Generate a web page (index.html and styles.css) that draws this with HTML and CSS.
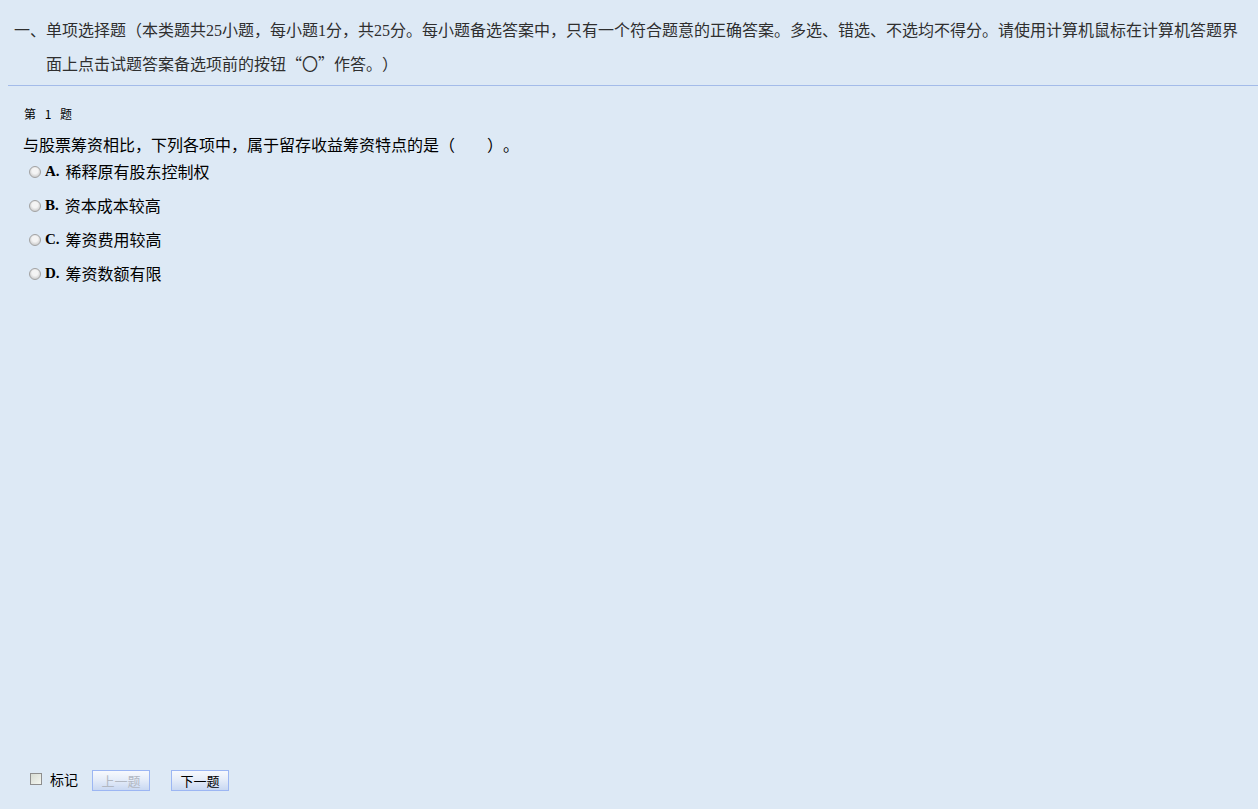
FILE: index.html
```html
<!DOCTYPE html>
<html lang="zh-CN">
<head>
<meta charset="utf-8">
<title>单项选择题</title>
<link rel="stylesheet" href="styles.css">
</head>
<body>
<div class="page">
  <div class="section-head">
    <p class="section-title">一、单项选择题（本类题共25小题，每小题1分，共25分。每小题备选答案中，只有一个符合题意的正确答案。多选、错选、不选均不得分。请使用计算机鼠标在计算机答题界面上点击试题答案备选项前的<span class="cjk">按钮“〇”作答。）</span></p>
  </div>
  <div class="question">
    <div class="q-no">第 1 题</div>
    <div class="q-text">与股票筹资相比，下列各项中，属于留存收益筹资特点的是（　　）。</div>
    <ul class="options">
      <li class="option"><span class="radio"></span><b class="letter">A.</b><span class="opt-text">稀释原有股东控制权</span></li>
      <li class="option"><span class="radio"></span><b class="letter">B.</b><span class="opt-text">资本成本较高</span></li>
      <li class="option"><span class="radio"></span><b class="letter">C.</b><span class="opt-text">筹资费用较高</span></li>
      <li class="option"><span class="radio"></span><b class="letter">D.</b><span class="opt-text">筹资数额有限</span></li>
    </ul>
  </div>
  <div class="footer">
    <label class="mark"><span class="checkbox"></span><span class="mark-text">标记</span></label>
    <button class="btn btn-disabled" type="button">上一题</button>
    <button class="btn" type="button">下一题</button>
  </div>
</div>
</body>
</html>
```
FILE: styles.css
```css
html, body {
  margin: 0;
  padding: 0;
  background: #dde9f5;
}
body {
  font-family: "Liberation Serif", "Noto Sans CJK SC", serif;
  color: #000;
  text-spacing-trim: space-all;
}
.page {
  display: flex;
  flex-direction: column;
  min-height: 809px;
  box-sizing: border-box;
}
.cjk {
  font-family: "Noto Sans CJK SC", sans-serif;
}
.section-head {
  margin-left: 8px;
  border-bottom: 1px solid #a3bbe9;
  padding: 14px 16px 4px 38px;
}
.section-title {
  margin: 0;
  font-size: 16px;
  line-height: 33px;
  text-indent: -32px;
  color: #2f2f2f;
}
.question {
  flex: 1;
  padding: 19px 0 0 23px;
}
.q-no {
  font-family: "Noto Sans CJK SC", sans-serif;
  font-size: 12px;
  line-height: 18px;
  padding-left: 1px;
  word-spacing: 6px;
}
.q-text {
  font-size: 16px;
  line-height: 20px;
  margin-top: 13px;
}
.options {
  list-style: none;
  margin: 0;
  padding: 0 0 0 6px;
}
.option {
  display: flex;
  align-items: center;
  height: 34px;
  font-size: 16px;
  margin-top: -2px;
}
.option + .option {
  margin-top: 0;
}
.radio {
  width: 10px;
  height: 10px;
  border-radius: 50%;
  border: 1px solid #a2a2a2;
  background: radial-gradient(circle at 50% 40%, #f4f4f4 0 35%, #d4d4d4 70%);
  margin-right: 4px;
  margin-top: 1px;
}
.letter {
  font-family: "Liberation Serif", serif;
  font-size: 15px;
  font-weight: bold;
  margin-right: 6px;
}
.opt-text {
  font-family: "Noto Sans CJK SC", sans-serif;
}
.footer {
  display: flex;
  align-items: center;
  padding: 0 0 18px 30px;
  height: 21px;
}
.mark {
  display: flex;
  align-items: center;
  font-family: "Noto Sans CJK SC", sans-serif;
  font-size: 14px;
  margin-right: 14px;
}
.mark-text {
  margin-top: -3px;
}
.checkbox {
  width: 10px;
  height: 10px;
  border: 1px solid #8e8e8e;
  background: linear-gradient(135deg, #d7dcd4, #f4f6f0);
  margin-right: 8px;
  margin-top: -4px;
}
.btn {
  width: 58px;
  height: 21px;
  padding: 0;
  margin-right: 21px;
  border: 1px solid #9cb6f3;
  background: linear-gradient(to bottom, #f7f9fd 0%, #e6edf9 45%, #c9d8f2 100%);
  font-family: "Noto Sans CJK SC", sans-serif;
  font-size: 13px;
  line-height: 19px;
  color: #000;
}
.btn-disabled {
  color: #b2b8c2;
}
```
